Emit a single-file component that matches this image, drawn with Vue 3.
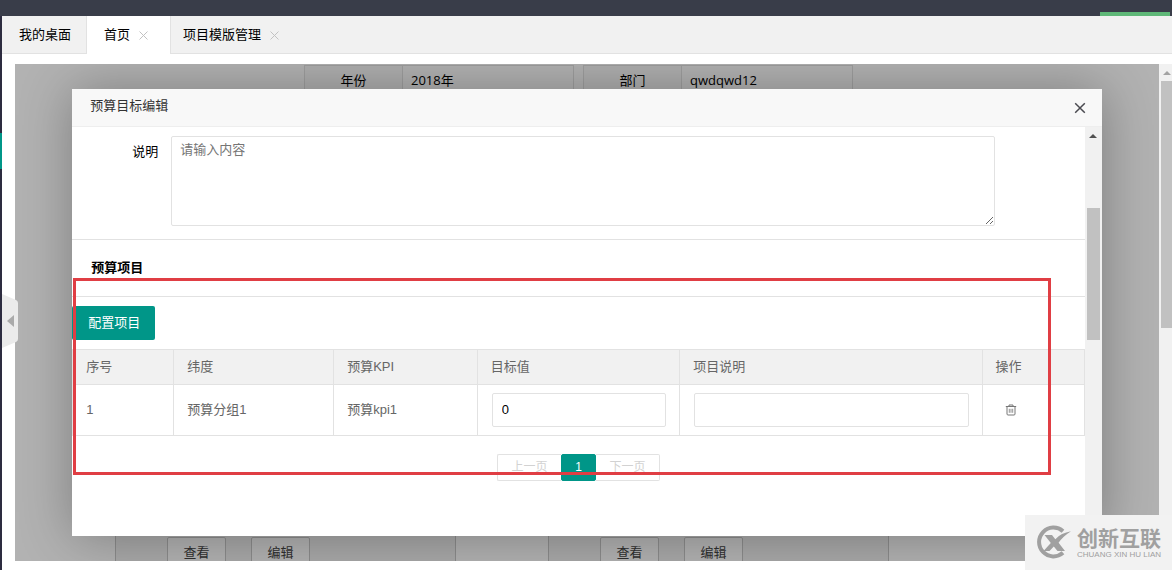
<template>
  <div class="layout">
    <header class="topbar"><span class="topbar-mark"></span></header>
    <div class="shell">
      <aside class="side"><span class="side-active"></span></aside>
      <main class="main">
        <nav class="tabs">
          <a v-for="tab in tabs" :key="tab.title" href="#" class="tab" :class="tab.kind" @click.prevent>
            {{ tab.title }}
            <svg v-if="tab.closable" class="tab-close" viewBox="0 0 9 9"><path d="M.5 .5l8 8M8.5 .5l-8 8" /></svg>
          </a>
        </nav>

        <div class="viewport">
          <section class="frame">
            <form class="filters" @submit.prevent>
              <div v-for="f in filters" :key="f.id" class="filter">
                <label :for="f.id">{{ f.label }}</label>
                <input :id="f.id" v-model="f.value" type="text">
              </div>
            </form>
            <div class="cards">
              <div v-for="n in 2" :key="n" class="card">
                <button type="button">查看</button>
                <button type="button">编辑</button>
              </div>
            </div>

            <div class="shade">
              <div class="dialog" role="dialog" aria-labelledby="dialog-title">
                <div class="dialog-head">
                  <span id="dialog-title">预算目标编辑</span>
                  <button type="button" class="dialog-close" aria-label="关闭">
                    <svg viewBox="0 0 12 12"><path d="M1.2 1.2l9.6 9.6M10.8 1.2l-9.6 9.6" /></svg>
                  </button>
                </div>
                <div class="dialog-body">
                  <div class="content">
                    <div class="remark">
                      <label for="remark">说明</label>
                      <textarea id="remark" v-model="remark" placeholder="请输入内容"></textarea>
                    </div>
                    <h3 class="section-title">预算项目</h3>
                    <button type="button" class="btn-primary">配置项目</button>
                    <table class="grid">
                      <colgroup>
                        <col v-for="(c, i) in columns" :key="i" :style="{ width: c.width + '%' }">
                      </colgroup>
                      <thead>
                        <tr><th v-for="(c, i) in columns" :key="i">{{ c.title }}</th></tr>
                      </thead>
                      <tbody>
                        <tr v-for="row in rows" :key="row.id">
                          <td>{{ row.id }}</td>
                          <td>{{ row.group }}</td>
                          <td>{{ row.kpi }}</td>
                          <td class="field"><input v-model="row.target" type="text" aria-label="目标值"></td>
                          <td class="field"><input v-model="row.note" type="text" aria-label="项目说明"></td>
                          <td>
                            <button type="button" class="icon-btn" aria-label="删除">
                              <svg viewBox="0 0 12 12">
                                <path d="M.8 2.5h10.4M4 2.3V1h4v1.3M2 2.8v7.2q0 1 1 1h6q1 0 1-1V2.8" />
                                <path d="M4.3 4.8v4M6 4.8v4M7.7 4.8v4" stroke-width=".8" />
                              </svg>
                            </button>
                          </td>
                        </tr>
                      </tbody>
                    </table>
                    <div class="pager">
                      <button type="button" disabled>上一页</button>
                      <button type="button" class="current">1</button>
                      <button type="button" disabled>下一页</button>
                    </div>
                    <div class="highlight"></div>
                  </div>
                  <div class="scrollbar dialog-scroll">
                    <span class="scroll-up"></span>
                    <span class="scroll-thumb"></span>
                  </div>
                </div>
              </div>
            </div>
          </section>
          <div class="scrollbar page-scroll">
            <span class="scroll-up"></span>
            <span class="scroll-thumb"></span>
          </div>
        </div>
      </main>
    </div>

    <button type="button" class="collapse" aria-label="收起">
      <svg viewBox="0 0 16 54">
        <path d="M0 0L14 6Q16 7 16 9V45Q16 47 14 48L0 54Z" fill="#ebebeb" />
        <path d="M12 21V33L5 27Z" fill="#aaa" />
      </svg>
    </button>

    <div class="brand">
      <svg class="brand-logo" viewBox="0 0 36 34">
        <path d="M27 6.2A14.4 14.4 0 1 0 27 27.8" fill="none" stroke="#a0a0a0" stroke-width="4" />
        <path d="M8.5 10H16L19.3 14.2Q25 8 35 6.3Q27 11.5 22.6 17.7L29 26H21.5L17.8 21.6L13.5 26H7.5L14.8 17.9Z" fill="#a0a0a0" />
      </svg>
      <div class="brand-text">
        <strong>创新互联</strong>
        <small>CHUANG XIN HU LIAN</small>
      </div>
    </div>
  </div>
</template>

<script setup>
import { ref } from 'vue'

const tabs = [
  { title: '我的桌面', kind: 'home' },
  { title: '首页', kind: 'active', closable: true },
  { title: '项目模版管理', kind: 'plain', closable: true },
]

const filters = ref([
  { id: 'year', label: '年份', value: '2018年' },
  { id: 'dept', label: '部门', value: 'qwdqwd12' },
])

const remark = ref('')

// widths in percent of the table
const columns = [
  { title: '序号', width: 10 },
  { title: '纬度', width: 15.8 },
  { title: '预算KPI', width: 14.2 },
  { title: '目标值', width: 20 },
  { title: '项目说明', width: 29.9 },
  { title: '操作', width: 10.1 },
]

const rows = ref([
  { id: 1, group: '预算分组1', kpi: '预算kpi1', target: '0', note: '' },
])
</script>

<style>
body { margin: 0; background: #fff; }
</style>

<style scoped>
.layout {
  position: relative; display: flex; flex-direction: column; height: 100vh; overflow: hidden;
  font: 13px/20px "Liberation Sans", "Noto Sans CJK SC", sans-serif; color: #000;
}
.layout *, .layout *::before { box-sizing: border-box; }
button, input, textarea { font: inherit; color: inherit; margin: 0; }
button { padding: 0; cursor: pointer; }
svg { display: block; fill: none; }

.topbar { flex: none; height: 16px; padding-right: 2px; background: #393d49; display: flex; justify-content: flex-end; align-items: flex-end; }
.topbar-mark { width: 70px; height: 4px; background: #5fb878; }
.shell { flex: 1; display: flex; min-height: 0; }
.side { flex: none; width: 2px; padding-top: 117px; background: #2d2c40; }
.side-active { display: block; height: 36px; background: #009688; }
.main { flex: 1; min-width: 0; display: flex; flex-direction: column; }

/* tabs */
.tabs { flex: none; display: flex; height: 38px; background: #f1f1f1; border-bottom: 1px solid #e2e2e2; }
.tab { display: flex; align-items: center; gap: 9px; height: 37px; padding: 0 15px 0 17px; color: #000; text-decoration: none; border-right: 1px solid #e2e2e2; }
.tab.active { height: 38px; padding-right: 22px; padding-bottom: 1px; background: #fff; }
.tab.plain { padding-left: 12px; border-right: 0; }
.tab-close { width: 9px; height: 9px; margin-top: 2px; stroke: #c2c2c2; }

/* page behind the dialog */
.viewport { flex: 1; display: flex; min-height: 0; padding: 10px 0 9px 13px; }
.frame { position: relative; flex: 1; min-width: 0; display: flex; flex-direction: column; justify-content: space-between; overflow: hidden; }
.filters { display: flex; gap: 9px; padding: 1px 0 0 289px; font-family: "Open Sans", "Noto Sans CJK SC", sans-serif; }
.filter { display: flex; width: 270px; height: 30px; border: 1px solid #e2e2e2; }
.filter label { width: 98px; line-height: 28px; text-align: center; background: #fbfbfb; border-right: 1px solid #e2e2e2; }
.filter input { flex: 1; min-width: 0; padding: 0 8px; border: 0; background: #fff; }
.cards { display: flex; gap: 92px; height: 25px; padding-left: 100px; }
.card { flex: 0 1 341px; display: flex; gap: 25px; height: 25px; padding: 1px 0 0 51px; background: #f2f2f2; border: solid #c9c9c9; border-width: 0 1px; }
.card button { width: 59px; height: 32px; background: #fff; border: 1px solid #c9c9c9; border-radius: 2px; color: #444; }

/* dialog */
.shade { position: absolute; inset: 0; display: flex; align-items: center; justify-content: center; background: rgba(0, 0, 0, .3); }
.dialog { width: 90%; height: 90%; display: flex; flex-direction: column; background: #fff; box-shadow: 1px 1px 50px rgba(0, 0, 0, .3); }
.dialog-head { flex: none; display: flex; justify-content: space-between; align-items: center; height: 38px; padding: 0 16px 2px 18px; background: #f8f8f8; border-bottom: 1px solid #eee; color: #333; }
.dialog-close { width: 12px; height: 12px; margin-top: 4px; background: none; border: 0; }
.dialog-close svg { width: 12px; height: 12px; stroke: #4a4a50; stroke-width: 1.5; }
.dialog-body { flex: 1; display: flex; min-height: 0; }
.content { position: relative; flex: 1; min-width: 0; overflow: hidden; }
.remark { display: flex; gap: 13px; padding: 9px 90px 13px 0; }
.remark label { flex: none; width: 86px; padding-top: 6px; text-align: right; }
.remark textarea { flex: 1; min-width: 0; height: 90px; padding: 3px 8px; border: 1px solid #e2e2e2; border-radius: 2px; resize: vertical; background: #fff; }
.remark textarea::placeholder { color: #757575; }
.section-title { margin: 0 0 9px; padding: 18px 19px; height: 58px; font-size: 13px; line-height: 20px; font-weight: 700; border: solid #e2e2e2; border-width: 1px 0; }
.btn-primary { display: block; height: 34px; padding: 0 15px 0 16px; border: 0; border-radius: 2px; background: #009688; color: #fff; }

.grid { width: 100%; margin-top: 9px; table-layout: fixed; border-collapse: collapse; color: #666; }
.grid th, .grid td { padding: 8px 13px; border: 1px solid #e2e2e2; text-align: left; font-weight: 400; }
.grid th { padding: 7px 13px; background: #f1f1f1; }
.grid .field { padding-left: 14px; }
.grid input { display: block; width: 100%; height: 34px; padding: 0 9px; border: 1px solid #e2e2e2; border-radius: 2px; color: #000; background: #fff; }
.icon-btn { display: block; width: 12px; height: 12px; margin-left: 9px; background: none; border: 0; }
.icon-btn svg { width: 12px; height: 12px; stroke: #777; }

.pager { display: flex; justify-content: center; margin-top: 18px; font-size: 12px; }
.pager button { width: 64px; height: 27px; border: 1px solid #e2e2e2; background: #fff; color: #d2d2d2; }
.pager button:first-child { border-right: 0; border-radius: 2px 0 0 2px; }
.pager button:last-child { border-left: 0; border-radius: 0 2px 2px 0; }
.pager .current { width: 35px; border-color: #009688; border-radius: 2px; background: #009688; color: #fff; }

.highlight { position: absolute; top: 151px; left: 1px; right: 34px; height: 197px; border: 3px solid #e03e44; pointer-events: none; }

/* scrollbars */
.scrollbar { flex: none; display: flex; flex-direction: column; background: #f1f1f1; }
.scroll-up { flex: none; align-self: center; border: 4px solid transparent; border-top: 0; border-bottom-color: #505050; }
.scroll-thumb { background: #c1c1c1; }
.dialog-scroll { width: 17px; padding: 7px 2px 0; }
.dialog-scroll .scroll-thumb { height: 132px; margin-top: 70px; }
.page-scroll { width: 13px; padding: 7px 0 0 2px; }
.page-scroll .scroll-up { border-bottom-color: #a3a3a3; }
.page-scroll .scroll-thumb { height: 247px; margin-top: 6px; }

.collapse { position: absolute; left: 2px; top: 294px; width: 16px; height: 54px; border: 0; background: none; }
.collapse svg { width: 16px; height: 54px; }

.brand { position: absolute; right: 0; bottom: 0; display: flex; align-items: center; gap: 5px; width: 147px; height: 55px; padding: 0 0 2px 11px; background: #f2f2f2; color: #a0a0a0; }
.brand-logo { flex: none; width: 36px; height: 34px; }
.brand-text { display: flex; flex-direction: column; white-space: nowrap; }
.brand-text strong { font: 700 21px/26px "Noto Sans CJK SC", sans-serif; }
.brand-text small { font-size: 8px; line-height: 10px; }
</style>
